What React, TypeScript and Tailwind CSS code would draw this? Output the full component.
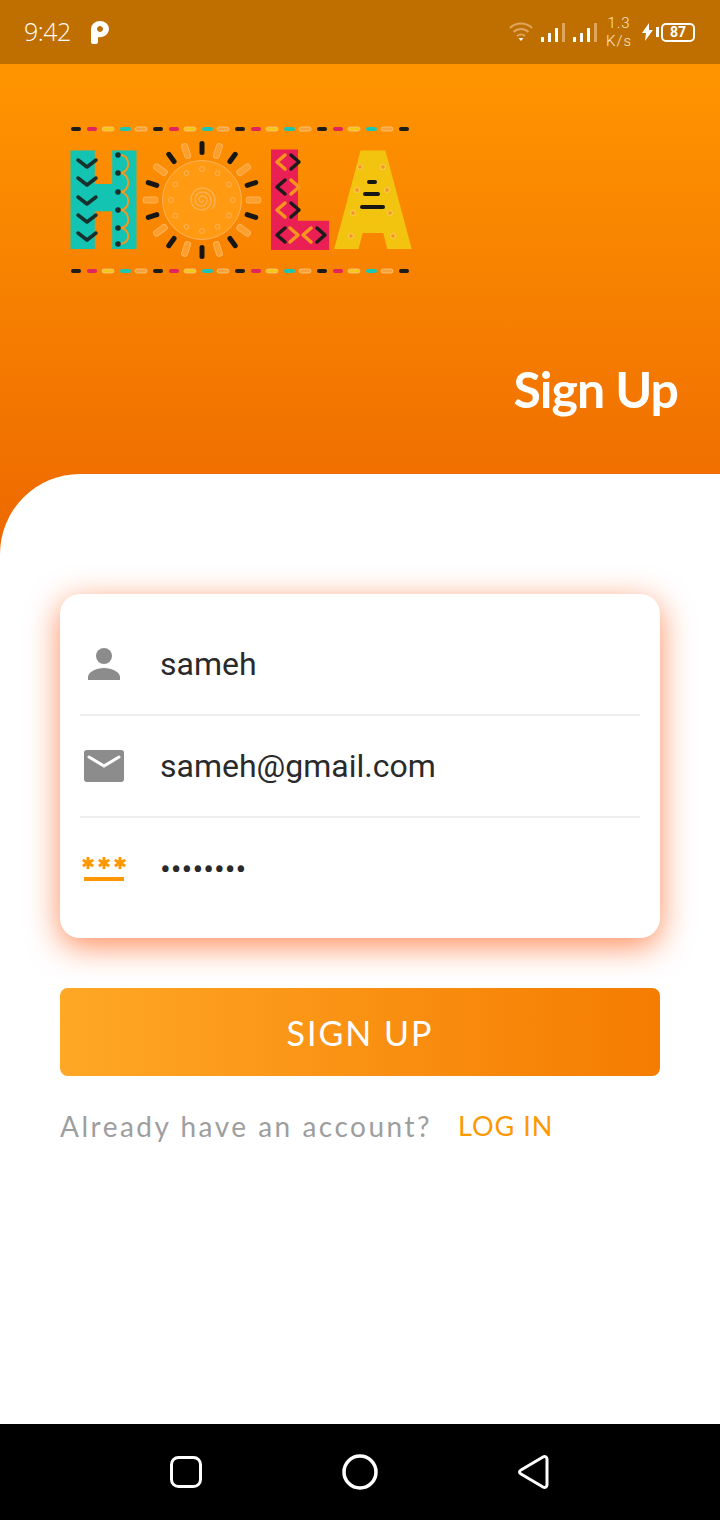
const logoFont = '"DejaVu Sans", sans-serif'

const dashColors = ['#1c1c1c', '#e0245e', '#f5c518', '#1cc4b4', '#f7a23a']
const dashOffsets = [0, 16, 31, 49, 64]
const dashWidths = [10, 10, 12, 11, 12]

function DashRow({ y }: { y: number }) {
  const dashes = Array.from({ length: 21 }).map((_, i) => ({
    x: 11 + Math.floor(i / 5) * 82 + dashOffsets[i % 5],
    w: dashWidths[i % 5],
    color: dashColors[i % 5],
    outlined: i % 5 === 2 || i % 5 === 4,
  }))
  return (
    <g>
      {dashes.map((d, i) => (
        <rect key={i} x={d.x} y={y - 2} width={d.w} height={4} rx={2} fill={d.color} stroke={d.outlined ? '#fbc77e' : 'none'} strokeWidth={0.8} />
      ))}
    </g>
  )
}

function Sun() {
  const cx = 142
  const cy = 86
  const rays = Array.from({ length: 20 }).map((_, i) => (i * 360) / 20)
  const dots = Array.from({ length: 12 }).map((_, i) => (i * 360) / 12)
  const spiral = Array.from({ length: 90 }).map((_, i) => {
    const t = i * 0.22
    const r = 1 + i * 0.14
    return `${cx + r * Math.cos(t)},${cy + r * Math.sin(t)}`
  })
  return (
    <g>
      <circle cx={cx} cy={cy} r={39.5} fill="#ff9a12" stroke="#fbb45e" strokeWidth={1} />
      {dots.map(a => (
        <circle key={a} cx={cx + 31 * Math.cos((a * Math.PI) / 180)} cy={cy + 31 * Math.sin((a * Math.PI) / 180)} r={2.4} fill="none" stroke="#fbb45e" strokeWidth={1} />
      ))}
      <polyline points={spiral.join(' ')} fill="none" stroke="#fbb45e" strokeWidth={1.2} />
      {rays.map((a, i) => (
        <rect
          key={a}
          x={i % 2 === 0 ? cx - 2.5 : cx - 3}
          y={cy - 59}
          width={i % 2 === 0 ? 5 : 6}
          height={i % 2 === 0 ? 14 : 15}
          rx={2.5}
          fill={i % 2 === 0 ? '#161616' : '#ff9f2b'}
          stroke={i % 2 === 0 ? 'none' : '#fbb45e'}
          strokeWidth={1}
          transform={`rotate(${a} ${cx} ${cy})`}
        />
      ))}
    </g>
  )
}

function Chevron({ x, y, dir, color }: { x: number, y: number, dir: 'l' | 'r' | 'd', color: string }) {
  const d = dir === 'l' ? `M${x + 8},${y} L${x},${y + 7} L${x + 8},${y + 14}` : dir === 'r' ? `M${x},${y} L${x + 8},${y + 7} L${x},${y + 14}` : `M${x},${y} L${x + 9},${y + 7} L${x + 18},${y}`
  return <path d={d} fill="none" stroke={color} strokeWidth={3.5} strokeLinecap="round" strokeLinejoin="round" />
}

function HolaLogo() {
  return (
    <svg width="380" height="160" viewBox="0 0 380 160" className="block">
      <DashRow y={15} />
      <DashRow y={157} />
      <text x={6} y={130} textLength={75} lengthAdjust="spacingAndGlyphs" fontSize={121} fontWeight={700} fontFamily={logoFont} fill="#14c4b2" stroke="#14c4b2" strokeWidth={10}>H</text>
      {[46, 64, 83, 101, 119].map(y => <Chevron key={y} x={18} y={y} dir="d" color="#17302e" />)}
      <path d="M60,41 c10,-1 12,17 0,18 c10,0 12,18 0,19 c10,0 12,17 0,18 c10,0 12,18 0,18 c10,0 12,15 0,16" fill="none" stroke="#f7961e" strokeWidth={2} />
      {[41, 59, 78, 96, 114, 130].map(y => <circle key={y} cx={58} cy={y} r={2.8} fill="#17302e" />)}
      <Sun />
      <text x={207} y={130} textLength={60} lengthAdjust="spacingAndGlyphs" fontSize={121} fontWeight={700} fontFamily={logoFont} fill="#ea2055" stroke="#ea2055" strokeWidth={12}>L</text>
      {[
        [217, 41, 'l', '#f7961e'], [231, 41, 'r', '#1c1c1c'],
        [217, 66, 'l', '#1c1c1c'], [231, 66, 'r', '#f7961e'],
        [217, 89, 'l', '#f7961e'], [231, 89, 'r', '#1c1c1c'],
        [217, 114, 'l', '#1c1c1c'], [230, 114, 'r', '#f7961e'], [243, 114, 'l', '#f7961e'], [257, 114, 'r', '#1c1c1c'],
      ].map((c, i) => <Chevron key={i} x={c[0] as number} y={c[1] as number} dir={c[2] as 'l' | 'r'} color={c[3] as string} />)}
      <text x={279} y={130} textLength={68} lengthAdjust="spacingAndGlyphs" fontSize={121} fontWeight={700} fontFamily={logoFont} fill="#f2c30f" stroke="#f2c30f" strokeWidth={10}>A</text>
      {/* patch over the counter of the A, the logo's A is solid there */}
      <rect x={303} y={70} width={24} height={32} fill="#f2c30f" />
      {[[307, 66, 10], [303, 78, 17], [300, 91, 25]].map((b, i) => <rect key={i} x={b[0]} y={b[1]} width={b[2]} height={4} rx={2} fill="#161616" />)}
      {[[300, 53], [323, 53], [297, 76], [327, 76], [293, 99], [330, 99], [291, 122], [333, 122]].map((p, i) => <circle key={i} cx={p[0]} cy={p[1]} r={2.4} fill="#f7961e" stroke="#f9d77a" strokeWidth={0.8} />)}
    </svg>
  )
}

function StatusBar() {
  return (
    <div className="flex h-16 shrink-0 items-center justify-between bg-[#bf6f00] pl-6 pr-[25px] text-white">
      <div className="flex items-center gap-5">
        <span className="text-[25px] font-light tracking-[-0.5px] [font-family:'Open_Sans',sans-serif]">9:42</span>
        <svg width="18" height="23" viewBox="0 0 18 23">
          <path fillRule="evenodd" fill="#fff" d="M0,8 a9,8 0 0 1 18,0 a9,9 0 0 1 -11,8 v5 a2,2 0 0 1 -2,2 h-3 a2,2 0 0 1 -2,-2z M9,5 a3,3 0 1 0 .01,0z" />
        </svg>
      </div>
      <div className="flex items-center">
        <svg width="24" height="20" viewBox="0 0 24 20" fill="none" stroke="#dfa55c" strokeWidth="2" className="mr-[8px]">
          <path d="M1,6 a16,16 0 0 1 22,0" />
          <path d="M4.5,10 a11,11 0 0 1 15,0" />
          <path d="M8,14 a6,6 0 0 1 8,0" />
          <path d="M9.5,16 h5 L12,19z" fill="#fff" stroke="none" />
        </svg>
        {[0, 1].map(i => (
          <svg key={i} width="24" height="20" viewBox="0 0 24 20" className="mr-[8px]">
            <rect x="0" y="15" width="3" height="5" fill="#fff" />
            <rect x="7" y="11" width="3" height="9" fill="#fff" />
            <rect x="14" y="6" width="3" height="14" fill="#fff" />
            <rect x="21" y="1" width="3" height="19" fill="#dfa55c" />
          </svg>
        ))}
        <div className="mr-[11px] ml-[2px] flex w-6 flex-col items-center text-[15px] leading-[18px] font-light tracking-[1px] text-[#fbe6c8] [font-family:'Roboto',sans-serif]">
          <span>1.3</span>
          <span>K/s</span>
        </div>
        <svg width="11" height="18" viewBox="0 0 11 18" className="mr-[3px]">
          <path d="M7,0 L0,10 h4 L3,18 L11,7 h-4z" fill="#fff" />
        </svg>
        <div className="mr-[2px] h-[10px] w-[3px] bg-white" />
        <div className="flex h-[19px] w-[34px] items-center justify-center rounded-[5px] border-2 border-white text-[14px] leading-none font-bold text-white [font-family:'Roboto',sans-serif]">87</div>
      </div>
    </div>
  )
}

function PersonIcon() {
  return (
    <svg width="32" height="32" viewBox="0 0 32 32" fill="#8c8c8c">
      <circle cx="16" cy="8" r="8" />
      <path d="M0,32 v-3 c0,-5 8,-9 16,-9 s16,4 16,9 v3z" />
    </svg>
  )
}

function MailIcon() {
  return (
    <svg width="40" height="32" viewBox="0 0 40 32">
      <rect width="40" height="32" rx="3" fill="#8c8c8c" />
      <path d="M5,7 L20,16 L35,7" fill="none" stroke="#fff" strokeWidth="3" strokeLinecap="round" />
    </svg>
  )
}

function Asterisk({ cx }: { cx: number }) {
  return (
    <g stroke="#ff9800" strokeWidth="3" transform={`translate(${cx} 6)`}>
      <line x1="0" y1="-6" x2="0" y2="6" />
      <line x1="-5.2" y1="-3" x2="5.2" y2="3" />
      <line x1="-5.2" y1="3" x2="5.2" y2="-3" />
    </g>
  )
}

function PasswordIcon() {
  return (
    <svg width="44" height="24" viewBox="0 0 44 24">
      <Asterisk cx={6} />
      <Asterisk cx={22} />
      <Asterisk cx={38} />
      <rect x="2" y="20" width="40" height="4" fill="#ff9800" />
    </svg>
  )
}

function Field({ icon, value, last }: { icon: React.ReactNode, value: string, last?: boolean }) {
  return (
    <div className={last ? 'flex h-[102px] items-center' : 'flex h-[102px] items-center border-b-2 border-[#eeeeee]'}>
      <div className="flex w-12 justify-center">{icon}</div>
      <span className="ml-[32px] text-[32px] text-[#2a2a2a] [font-family:'Roboto',sans-serif]">{value}</span>
    </div>
  )
}

export default function App() {
  return (
    <div className="flex h-[1520px] w-[720px] flex-col overflow-hidden bg-white">
      <StatusBar />
      <div className="flex flex-1 flex-col bg-[linear-gradient(180deg,#ff9500_0%,#ed6800_100%)] bg-[length:100%_490px] bg-no-repeat">
        <div className="flex h-[410px] shrink-0 flex-col">
          <div className="mt-[50px] ml-[60px]"><HolaLogo /></div>
          <div className="mt-[83px] mr-[42px] text-right text-[50px] leading-[64px] font-bold tracking-[-1px] text-white [font-family:'Lato',sans-serif]">Sign Up</div>
        </div>
        <div className="flex flex-1 flex-col rounded-tl-[80px] bg-white px-[60px] pt-[120px]">
          <div className="rounded-[20px] bg-white px-5 pt-[20px] pb-[18px] shadow-[0_8px_32px_rgba(255,90,20,0.7)]">
            <Field icon={<PersonIcon />} value="sameh" />
            <Field icon={<MailIcon />} value="sameh@gmail.com" />
            <Field icon={<PasswordIcon />} value="••••••••" last />
          </div>
          <div className="mt-[50px] flex h-[88px] items-center justify-center rounded-lg bg-[linear-gradient(90deg,#ffa726,#f57c00)] text-[34px] tracking-[2px] text-white [font-family:'Lato',sans-serif]">SIGN UP</div>
          <div className="mt-[29px] flex items-center">
            <span className="text-[28px] tracking-[2.5px] text-[#9e9e9e] [font-family:'Lato',sans-serif]">Already have an account?</span>
            <span className="ml-[26px] text-[27px] tracking-[1px] text-[#ff9800] [font-family:'Lato',sans-serif]">LOG IN</span>
          </div>
        </div>
      </div>
      <div className="flex h-24 shrink-0 items-center justify-center gap-[140px] bg-black">
        <svg width="32" height="32" viewBox="0 0 32 32" fill="none" stroke="#fff" strokeWidth="3"><rect x="1.5" y="1.5" width="29" height="29" rx="7" /></svg>
        <svg width="36" height="36" viewBox="0 0 36 36" fill="none" stroke="#fff" strokeWidth="3.5"><circle cx="18" cy="18" r="16" /></svg>
        <svg width="32" height="34" viewBox="0 0 32 34" fill="none" stroke="#fff" strokeWidth="3" strokeLinejoin="round"><path d="M29,4 C29,2 27,1 25,2 L3,15 C1,16 1,18 3,19 L25,32 C27,33 29,32 29,30 Z" /></svg>
      </div>
    </div>
  )
}
